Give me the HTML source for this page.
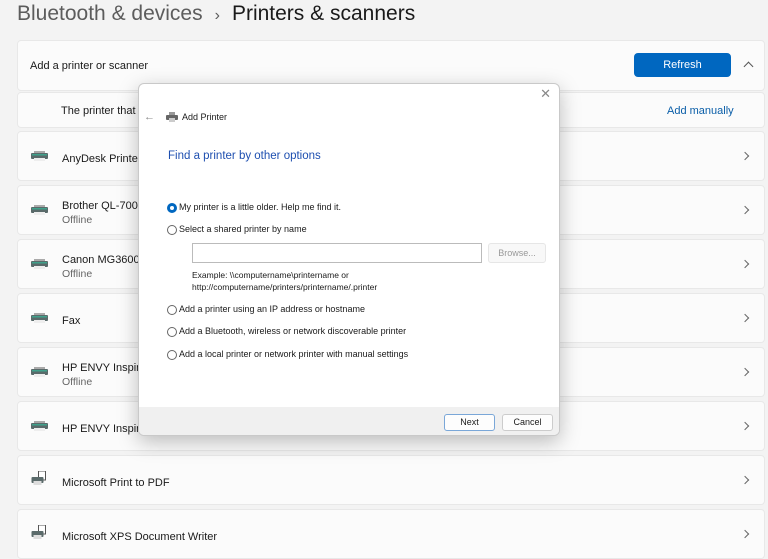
<!DOCTYPE html>
<html><head><style>
*{box-sizing:border-box;margin:0;padding:0}
body{width:768px;height:552px;overflow:hidden;background:#f3f3f3;font-family:"Liberation Sans",sans-serif;position:relative;color:#1a1a1a}
.h{position:absolute;top:0;left:17px;font-size:21px;line-height:28px;white-space:nowrap}
.h .a{color:#5c5c5c}.h .s{color:#5c5c5c;font-size:16px;margin:0 12px}.h .b{color:#1a1a1a}
.card{position:absolute;left:17px;width:748px;background:#fbfbfb;border:1px solid #e8e8e8;border-radius:4px}
.row{height:50px}
.row .ic{position:absolute;left:13px;top:19px;width:17px;height:10px}
.row .t{position:absolute;left:44px;font-size:11px;color:#1a1a1a}
.row .o{position:absolute;left:44px;font-size:10.5px;color:#666}
.chev{position:absolute;right:16px;top:21px;width:6px;height:6px;border-right:1.2px solid #666;border-top:1.2px solid #666;transform:rotate(45deg)}
.dlg{position:absolute;left:138px;top:83px;width:422px;height:353px;background:#fff;border:1px solid #c9c9c9;border-radius:6px;box-shadow:0 6px 20px rgba(0,0,0,.25);overflow:hidden;font-size:9px;color:#1a1a1a}
.radio{position:absolute;left:28px;width:10px;height:10px;border:1px solid #666;border-radius:50%;background:#fff}
.radio.on{border:3px solid #0067c0}
.lbl{position:absolute;left:40px;font-size:9px}
.btn{position:absolute;height:17px;border:1px solid #ccc;border-radius:3px;background:#fdfdfd;font-size:9px;text-align:center;line-height:15px}
</style></head><body>
<div class="h"><span class="a">Bluetooth &amp; devices</span><span class="s">&#x203A;</span><span class="b">Printers &amp; scanners</span></div>

<div class="card" style="top:40px;height:51px"><div style="position:absolute;left:12px;top:19px;font-size:11px">Add a printer or scanner</div>
<div style="position:absolute;left:616px;top:12px;width:97px;height:24px;background:#0067c0;border-radius:4px;color:#fff;font-size:11px;text-align:center;line-height:24px">Refresh</div>
<div style="position:absolute;left:727px;top:22px;width:7px;height:7px;border-left:1.2px solid #555;border-top:1.2px solid #555;transform:rotate(45deg)"></div></div>
<div class="card" style="top:92px;height:36px"><div style="position:absolute;left:43px;top:12px;font-size:11px">The printer that I</div><div style="position:absolute;left:649px;top:12px;font-size:11px;color:#0a5ea8">Add manually</div></div>

<div class="card row" style="top:131px"><svg class="ic" viewBox="0 0 17 10"><rect x="3" y="0" width="11" height="2" fill="#aaa"/><rect x="0" y="2" width="17" height="6" rx="1" fill="#5a6a6a"/><rect x="1" y="3" width="15" height="1.5" fill="#3fa08a"/><rect x="3" y="7" width="11" height="3" fill="#eee"/></svg><div class="t" style="top:21px">AnyDesk Printer</div><div class="chev"></div></div>
<div class="card row" style="top:185px"><svg class="ic" viewBox="0 0 17 10"><rect x="3" y="0" width="11" height="2" fill="#aaa"/><rect x="0" y="2" width="17" height="6" rx="1" fill="#5a6a6a"/><rect x="1" y="3" width="15" height="1.5" fill="#3fa08a"/><rect x="3" y="7" width="11" height="3" fill="#eee"/></svg><div class="t" style="top:14px">Brother QL-700</div><div class="o" style="top:28px">Offline</div><div class="chev"></div></div>
<div class="card row" style="top:239px"><svg class="ic" viewBox="0 0 17 10"><rect x="3" y="0" width="11" height="2" fill="#aaa"/><rect x="0" y="2" width="17" height="6" rx="1" fill="#5a6a6a"/><rect x="1" y="3" width="15" height="1.5" fill="#3fa08a"/><rect x="3" y="7" width="11" height="3" fill="#eee"/></svg><div class="t" style="top:14px">Canon MG3600 s</div><div class="o" style="top:28px">Offline</div><div class="chev"></div></div>
<div class="card row" style="top:293px"><svg class="ic" viewBox="0 0 17 10"><rect x="3" y="0" width="11" height="2" fill="#aaa"/><rect x="0" y="2" width="17" height="6" rx="1" fill="#5a6a6a"/><rect x="1" y="3" width="15" height="1.5" fill="#3fa08a"/><rect x="3" y="7" width="11" height="3" fill="#eee"/></svg><div class="t" style="top:21px">Fax</div><div class="chev"></div></div>
<div class="card row" style="top:347px"><svg class="ic" viewBox="0 0 17 10"><rect x="3" y="0" width="11" height="2" fill="#aaa"/><rect x="0" y="2" width="17" height="6" rx="1" fill="#5a6a6a"/><rect x="1" y="3" width="15" height="1.5" fill="#3fa08a"/><rect x="3" y="7" width="11" height="3" fill="#eee"/></svg><div class="t" style="top:14px">HP ENVY Inspire</div><div class="o" style="top:28px">Offline</div><div class="chev"></div></div>
<div class="card row" style="top:401px"><svg class="ic" viewBox="0 0 17 10"><rect x="3" y="0" width="11" height="2" fill="#aaa"/><rect x="0" y="2" width="17" height="6" rx="1" fill="#5a6a6a"/><rect x="1" y="3" width="15" height="1.5" fill="#3fa08a"/><rect x="3" y="7" width="11" height="3" fill="#eee"/></svg><div class="t" style="top:21px">HP ENVY Inspire</div><div class="chev"></div></div>
<div class="card row" style="top:455px"><svg class="ic" style="top:15px;height:14px" viewBox="0 0 16 14"><rect x="7" y="0" width="7" height="9" fill="#fff" stroke="#555" stroke-width="1"/><rect x="0" y="6" width="12" height="6" rx="1" fill="#5a6a6a"/><rect x="2" y="10" width="8" height="4" fill="#ddd"/></svg><div class="t" style="top:21px">Microsoft Print to PDF</div><div class="chev"></div></div>
<div class="card row" style="top:509px"><svg class="ic" style="top:15px;height:14px" viewBox="0 0 16 14"><rect x="7" y="0" width="7" height="9" fill="#fff" stroke="#555" stroke-width="1"/><rect x="0" y="6" width="12" height="6" rx="1" fill="#5a6a6a"/><rect x="2" y="10" width="8" height="4" fill="#ddd"/></svg><div class="t" style="top:21px">Microsoft XPS Document Writer</div><div class="chev"></div></div>

<div class="dlg">
<div style="position:absolute;right:8px;top:2px;font-size:13px;color:#888">&#x2715;</div>
<div style="position:absolute;left:5px;top:27px;font-size:11px;color:#888">&#x2190;</div>
<svg style="position:absolute;left:27px;top:28px" width="12" height="10" viewBox="0 0 12 10"><rect x="3" y="0" width="6" height="3" fill="#999"/><rect x="0" y="3" width="12" height="5" rx="1" fill="#666"/><rect x="3" y="6" width="6" height="4" fill="#ccc"/></svg>
<div style="position:absolute;left:43px;top:28px;font-size:9px">Add Printer</div>
<div style="position:absolute;left:29px;top:66px;font-size:11.5px;color:#1e4fb0">Find a printer by other options</div>
<div class="radio on" style="top:119px"></div><div class="lbl" style="top:118px">My printer is a little older. Help me find it.</div>
<div class="radio" style="top:141px"></div><div class="lbl" style="top:140px">Select a shared printer by name</div>
<div style="position:absolute;left:53px;top:159px;width:290px;height:20px;border:1px solid #bbb"></div>
<div class="btn" style="left:349px;top:159px;width:58px;height:20px;line-height:18px;color:#999;border-color:#e6e6e6;background:#f8f8f8">Browse...</div>
<div style="position:absolute;left:53px;top:185px;font-size:8.5px;line-height:12px">Example: \\computername\printername or<br>http://computername/printers/printername/.printer</div>
<div class="radio" style="top:221px"></div><div class="lbl" style="top:220px">Add a printer using an IP address or hostname</div>
<div class="radio" style="top:243px"></div><div class="lbl" style="top:242px">Add a Bluetooth, wireless or network discoverable printer</div>
<div class="radio" style="top:266px"></div><div class="lbl" style="top:265px">Add a local printer or network printer with manual settings</div>
<div style="position:absolute;left:0;top:323px;width:422px;height:30px;background:#f0f0f0"></div>
<div class="btn" style="left:305px;top:330px;width:51px;border-color:#7aa7d8">Next</div>
<div class="btn" style="left:363px;top:330px;width:51px">Cancel</div>
</div>
</body></html>
